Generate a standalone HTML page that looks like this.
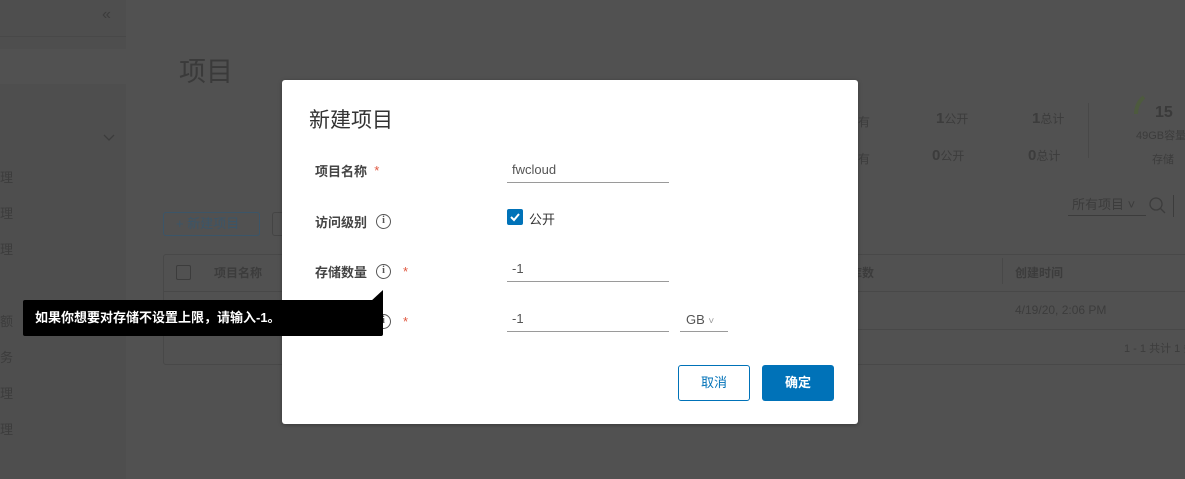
<!DOCTYPE html>
<html><head><meta charset="utf-8"><style>
*{box-sizing:border-box;margin:0;padding:0}
body{width:1185px;height:479px;overflow:hidden;background:#515151;font-family:"Liberation Sans","Noto Sans CJK SC",sans-serif;position:relative;color:#3a3a3a}
.abs{position:absolute;white-space:nowrap}
.side{left:0;top:0;width:126px;height:479px;background:#4e4e4e}
.st{font-size:13px;color:#3c3c3c;left:0}
.modal{left:282px;top:80px;width:576px;height:344px;background:#fff;border-radius:3px;box-shadow:0 1px 4px rgba(0,0,0,.3)}
.lbl{font-size:13px;color:#444;font-weight:bold;left:33px;display:flex;align-items:center;height:20px}
.req{color:#e0573f;font-weight:normal}
.info{display:inline-block;width:15px;height:15px;border:1.3px solid #555;border-radius:50%;font:bold 10px/12px "Liberation Serif",serif;text-align:center;color:#555;margin-left:9px}
.inp{left:225px;width:162px;border-bottom:1px solid #9a9a9a;font-size:13px;color:#555;padding-left:5px;height:23px;line-height:20px}
</style></head><body>
<div class="abs side"></div>
<div class="abs" style="left:0;top:36px;width:126px;height:1px;background:#484848"></div>
<div class="abs" style="left:0;top:49px;width:126px;height:35px;background:#515151"></div>
<div class="abs" style="left:102px;top:6px;font-size:16px;color:#3c3c3c">«</div>
<svg class="abs" style="left:102px;top:133px" width="14" height="10"><path d="M2 2l5 5 5-5" stroke="#3c3c3c" fill="none" stroke-width="1.3"/></svg>
<div class="abs st" style="top:167px">理</div>
<div class="abs st" style="top:203px">理</div>
<div class="abs st" style="top:239px">理</div>
<div class="abs st" style="top:311px">额</div>
<div class="abs st" style="top:347px">务</div>
<div class="abs st" style="top:383px">理</div>
<div class="abs st" style="top:419px">理</div>
<div class="abs" style="left:179px;top:50px;font-size:27px;color:#3a3a3a">项目</div>
<div class="abs" style="left:163px;top:212px;width:97px;height:24px;border:1px solid #3b5568;border-radius:3px;color:#3b5568;font-size:13px;line-height:22px;padding-left:12px">+ 新建项目</div>
<div class="abs" style="left:272px;top:212px;width:20px;height:24px;border:1px solid #444;border-radius:3px"></div>
<div class="abs" style="left:163px;top:254px;width:1030px;height:111px;border:1px solid #484848;border-radius:3px"></div>
<div class="abs" style="left:163px;top:291px;width:1030px;height:1px;background:#484848"></div>
<div class="abs" style="left:163px;top:329px;width:1030px;height:1px;background:#484848"></div>
<div class="abs" style="left:176px;top:265px;width:15px;height:15px;border:1px solid #3c3c3c;border-radius:2px"></div>
<div class="abs" style="left:214px;top:264px;font-size:12px;font-weight:bold;color:#3c3c3c">项目名称</div>
<div class="abs" style="left:850px;top:264px;font-size:12px;font-weight:bold;color:#3c3c3c">库数</div>
<div class="abs" style="left:1002px;top:258px;width:1px;height:26px;background:#484848"></div>
<div class="abs" style="left:1015px;top:264px;font-size:12px;font-weight:bold;color:#3c3c3c">创建时间</div>
<div class="abs" style="left:1015px;top:303px;font-size:12px;color:#3c3c3c">4/19/20, 2:06 PM</div>
<div class="abs" style="left:1124px;top:340px;font-size:11px;color:#3c3c3c">1 - 1 共计 1 条</div>
<div class="abs" style="left:858px;top:113px;font-size:12px;color:#3c3c3c">有</div>
<div class="abs" style="left:858px;top:150px;font-size:12px;color:#3c3c3c">有</div>
<div class="abs" style="left:936px;top:110px;font-size:12px;color:#3c3c3c"><b style="font-size:15px">1</b>公开</div>
<div class="abs" style="left:1032px;top:110px;font-size:12px;color:#3c3c3c"><b style="font-size:15px">1</b>总计</div>
<div class="abs" style="left:932px;top:147px;font-size:12px;color:#3c3c3c"><b style="font-size:15px">0</b>公开</div>
<div class="abs" style="left:1028px;top:147px;font-size:12px;color:#3c3c3c"><b style="font-size:15px">0</b>总计</div>
<div class="abs" style="left:1088px;top:103px;width:1px;height:55px;background:#484848"></div>
<svg class="abs" style="left:1128px;top:94px" width="30" height="40"><path d="M16 3A22 22 0 0 0 8 20" stroke="#4d5a3e" stroke-width="4" fill="none"/></svg>
<div class="abs" style="left:1155px;top:104px;font-size:16px;font-weight:bold;color:#3a3a3a">15</div>
<div class="abs" style="left:1136px;top:127px;font-size:11px;color:#3c3c3c">49GB容量</div>
<div class="abs" style="left:1152px;top:151px;font-size:11px;color:#3c3c3c">存储</div>
<div class="abs" style="left:1068px;top:194px;width:78px;height:22px;border-bottom:1px solid #3c3c3c;font-size:13px;color:#3c3c3c;padding-left:4px">所有项目 ˅</div>
<svg class="abs" style="left:1148px;top:196px" width="20" height="20"><circle cx="8" cy="8" r="6" stroke="#3c3c3c" fill="none" stroke-width="1.3"/><path d="M12 12l5 5" stroke="#3c3c3c" stroke-width="1.3"/></svg>
<div class="abs" style="left:1173px;top:195px;width:1px;height:22px;background:#3c3c3c"></div>

<div class="abs modal">
  <div class="abs" style="left:27px;top:24px;font-size:21px;color:#333">新建项目</div>
  <div class="abs lbl" style="top:80px">项目名称&nbsp;&nbsp;<span class="req">*</span></div>
  <div class="abs inp" style="top:80px">fwcloud</div>
  <div class="abs lbl" style="top:131px">访问级别<span class="info">i</span></div>
  <div class="abs" style="left:225px;top:129px;width:16px;height:16px;background:#0072b8;border-radius:2px"><svg width="16" height="16"><path d="M4 8l3 3 5-6" stroke="#fff" stroke-width="2" fill="none"/></svg></div>
  <div class="abs" style="left:247px;top:129px;font-size:13px;color:#333">公开</div>
  <div class="abs lbl" style="top:181px">存储数量<span class="info">i</span><span class="req" style="margin-left:12px">*</span></div>
  <div class="abs inp" style="top:179px">-1</div>
  <div class="abs lbl" style="top:231px">存储容量<span class="info">i</span><span class="req" style="margin-left:12px">*</span></div>
  <div class="abs inp" style="top:229px">-1</div>
  <div class="abs" style="left:398px;top:229px;width:48px;height:23px;border-bottom:1px solid #9a9a9a;font-size:13px;color:#555;padding-left:6px;line-height:22px">GB <span style="color:#999;font-size:10px">˅</span></div>
  <div class="abs" style="left:396px;top:285px;width:72px;height:36px;border:1px solid #0072b8;border-radius:3px;color:#0072b8;font-size:13px;text-align:center;line-height:34px">取消</div>
  <div class="abs" style="left:480px;top:285px;width:72px;height:36px;background:#0072b8;border-radius:3px;color:#fff;font-size:13px;font-weight:bold;text-align:center;line-height:36px">确定</div>
</div>
<div class="abs" style="left:23px;top:300px;width:360px;height:36px;background:#000;border-radius:2px;color:#fff;font-size:13px;font-weight:bold;line-height:36px;padding-left:12px">如果你想要对存储不设置上限，请输入-1。</div>
<svg class="abs" style="left:370px;top:290px" width="14" height="12"><path d="M0 12L13 0V12Z" fill="#000"/></svg>
</body></html>
